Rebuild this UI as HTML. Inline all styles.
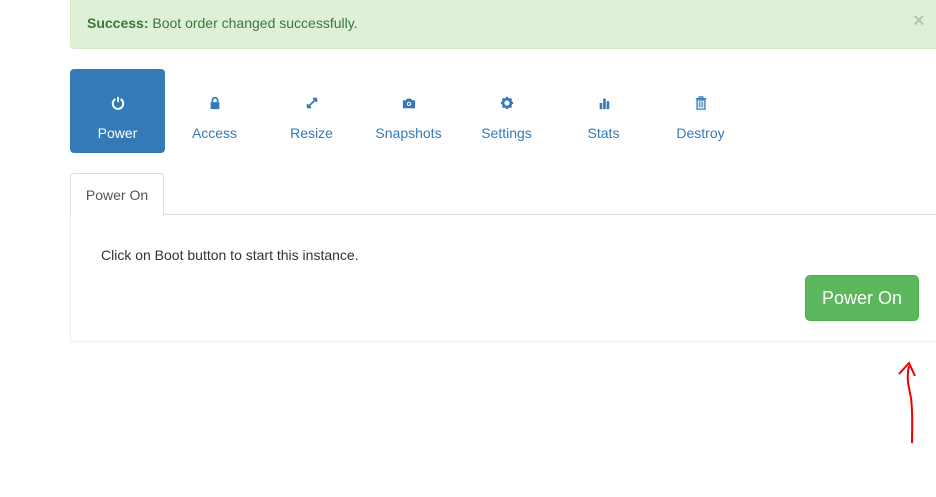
<!DOCTYPE html>
<html><head><style>
body{margin:0;width:936px;height:497px;background:#fff;font-family:"Liberation Sans",sans-serif;font-size:14px;position:relative;overflow:hidden}
.alert{position:absolute;left:70px;top:-5px;width:880px;height:52px;background:#dff0d8;border:1px solid #d6e9c6;border-radius:4px;color:#3c763d}
.alert span{position:absolute;left:16px;top:19px}
.x{position:absolute;left:842px;top:14px;font-size:20px;color:#b8c8b0;font-weight:bold}
.nav{position:absolute;top:69px;height:84px;width:95px;text-align:center;color:#337ab7;border-radius:4px}
.nav.a{background:#337ab7;color:#fff}
.nav svg{position:absolute;left:41px;top:27px}
.nav .l{position:absolute;left:0;right:0;top:56px;font-size:14px}
.tab{position:absolute;left:70px;top:173px;width:92px;height:42px;border:1px solid #ddd;border-bottom:none;border-radius:4px 4px 0 0;background:#fff;color:#555;text-align:center;line-height:42px;z-index:2}
.line{position:absolute;left:70px;top:214px;width:866px;height:1px;background:#ddd}
.panel{position:absolute;left:70px;top:215px;width:870px;height:126px;border-left:1px solid #eee;border-bottom:1px solid #eee}
.txt{position:absolute;left:101px;top:247px;color:#333}
.btn{position:absolute;left:805px;top:275px;width:112px;height:44px;background:#5cb85c;border:1px solid #4cae4c;border-radius:5px;color:#fff;font-size:18px;text-align:center;line-height:44px}
</style></head><body>
<div class="alert"><span><b>Success:</b> Boot order changed successfully.</span><div class="x">×</div></div>
<div class="nav a" style="left:70px"><svg width="14" height="14" viewBox="0 0 16 16"><path d="M5 3.5A6 6 0 1 0 11 3.5" fill="none" stroke="#fff" stroke-width="2.2"/><path d="M8 1v6" stroke="#fff" stroke-width="2.2"/></svg><div class="l">Power</div></div>
<div class="nav" style="left:167px"><svg width="14" height="14" viewBox="0 0 16 16"><path d="M5 7V5a3 3 0 0 1 6 0v2" fill="none" stroke="#337ab7" stroke-width="2"/><rect x="3" y="7" width="10" height="8" rx="1" fill="#337ab7"/></svg><div class="l">Access</div></div>
<div class="nav" style="left:264px"><svg width="14" height="14" viewBox="0 0 16 16"><path d="M3 13L13 3M9 3h4v4M3 9v4h4" fill="none" stroke="#337ab7" stroke-width="2"/></svg><div class="l">Resize</div></div>
<div class="nav" style="left:361px"><svg width="14" height="14" viewBox="0 0 16 16"><path d="M1 5h3l2-2h4l2 2h3v9H1z" fill="#337ab7"/><circle cx="8" cy="9" r="2.5" fill="#fff"/><circle cx="8" cy="9" r="1.3" fill="#337ab7"/></svg><div class="l">Snapshots</div></div>
<div class="nav" style="left:459px"><svg width="14" height="14" viewBox="0 0 16 16"><circle cx="8" cy="8" r="4.5" fill="none" stroke="#337ab7" stroke-width="3"/><path d="M8 1v3M8 12v3M1 8h3M12 8h3M3 3l2 2M11 11l2 2M3 13l2-2M11 5l2-2" stroke="#337ab7" stroke-width="2.5"/></svg><div class="l">Settings</div></div>
<div class="nav" style="left:556px"><svg width="14" height="14" viewBox="0 0 16 16"><rect x="3" y="8" width="3" height="7" fill="#337ab7"/><rect x="7" y="3" width="3" height="12" fill="#337ab7"/><rect x="11" y="6" width="3" height="9" fill="#337ab7"/></svg><div class="l">Stats</div></div>
<div class="nav" style="left:653px"><svg width="14" height="14" viewBox="0 0 16 16"><path d="M2 3h12M6 3V1h4v2" fill="none" stroke="#337ab7" stroke-width="1.5"/><path d="M3.5 4.5h9V15h-9z" fill="none" stroke="#337ab7" stroke-width="1.5"/><path d="M6 6v7M8 6v7M10 6v7" stroke="#337ab7" stroke-width="1"/></svg><div class="l">Destroy</div></div>
<div class="tab">Power On</div>
<div class="line"></div>
<div class="panel"></div>
<div class="txt">Click on Boot button to start this instance.</div>
<div class="btn">Power On</div>
<svg style="position:absolute;left:895px;top:358px" width="30" height="90" viewBox="0 0 30 90"><path d="M4 16L14 5L20 18M14 8C11 20 14 30 16 40C18 55 17 70 17 85" fill="none" stroke="#e00" stroke-width="2"/></svg>
</body></html>
